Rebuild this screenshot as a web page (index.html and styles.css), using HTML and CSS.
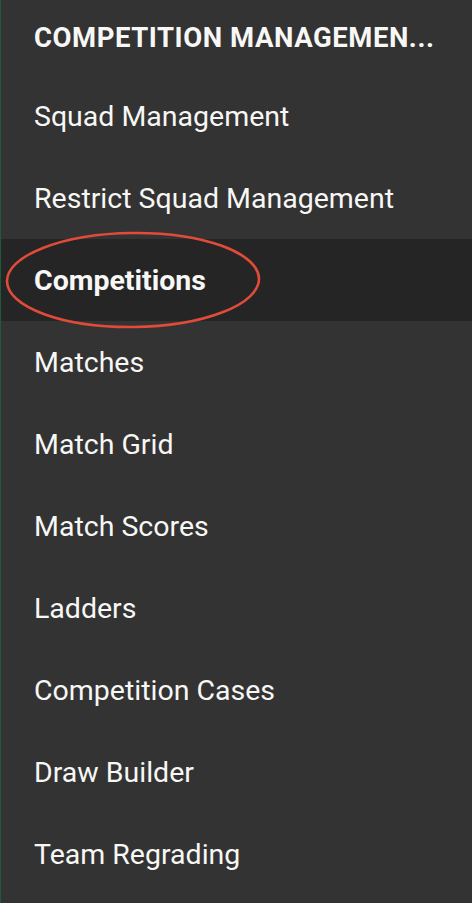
FILE: index.html
```html
<!DOCTYPE html>
<html>
<head>
<meta charset="utf-8">
<link rel="stylesheet" href="styles.css">
</head>
<body>
<nav class="drawer">
  <div class="header">COMPETITION MANAGEMEN...</div>
  <ul class="menu">
    <li class="item">Squad Management</li>
    <li class="item">Restrict Squad Management</li>
    <li class="item active">Competitions
      <svg class="circle" width="264" height="104" viewBox="0 0 264 104"><ellipse cx="132" cy="52" rx="126" ry="47" fill="none" stroke="#e04b3a" stroke-width="2.6" transform="rotate(-0.6 132 52)"/></svg>
    </li>
    <li class="item">Matches</li>
    <li class="item">Match Grid</li>
    <li class="item">Match Scores</li>
    <li class="item">Ladders</li>
    <li class="item">Competition Cases</li>
    <li class="item">Draw Builder</li>
    <li class="item">Team Regrading</li>
  </ul>
</nav>
</body>
</html>
```
FILE: styles.css
```css
html, body {
  margin: 0;
  padding: 0;
  background: #333333;
}
body {
  width: 472px;
  height: 903px;
  overflow: hidden;
}
.drawer {
  height: 903px;
  border-left: 1px solid #1e5a3b;
  background: #333333;
  font-family: Roboto, "Liberation Sans", sans-serif;
  color: #f7f7f5;
}
.header {
  height: 74px;
  display: flex;
  align-items: center;
  padding-left: 33px;
  font-weight: 700;
  font-size: 27.5px;
  letter-spacing: 0.55px;
  white-space: nowrap;
}
.menu {
  list-style: none;
  margin: 0;
  padding: 0;
}
.item {
  position: relative;
  height: 82px;
  display: flex;
  align-items: center;
  padding-left: 33px;
  font-size: 28.5px;
  white-space: nowrap;
}
.item:first-child {
  margin-top: 1px;
}
.item.active {
  background: #252525;
  font-weight: 700;
}
.circle {
  position: absolute;
  left: 0;
  top: -11px;
}
```
